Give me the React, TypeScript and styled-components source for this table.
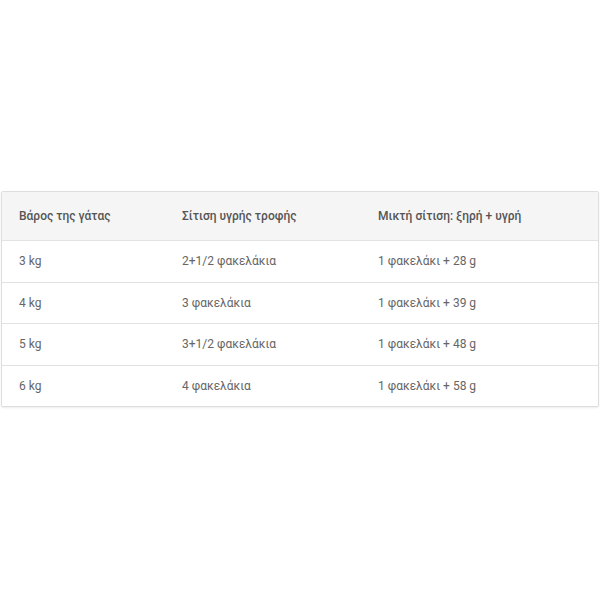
import React from "react";
import styled, { createGlobalStyle } from "styled-components";

const Global = createGlobalStyle`
  html, body { margin: 0; padding: 0; background: #fff; }
  body { font-family: Roboto, "Noto Sans", sans-serif; }
`;

const Page = styled.div`
  min-height: 598px;
  display: flex;
  flex-direction: column;
  justify-content: center;
  padding: 0 1px;
  box-sizing: border-box;
`;

const Table = styled.div`
  border: 1px solid #dedede;
  border-radius: 2px;
  box-shadow: 0 1px 2px rgba(0, 0, 0, 0.08);
  background: #fff;
`;

const Row = styled.div<{ $head?: boolean }>`
  display: grid;
  grid-template-columns: 163px 196px 1fr;
  align-items: center;
  box-sizing: border-box;
  height: ${(p) => (p.$head ? "48px" : "41.5px")};
  background: ${(p) => (p.$head ? "#f5f5f5" : "#fff")};
  border-top: ${(p) => (p.$head ? "none" : "1px solid #e2e2e2")};
`;

const Cell = styled.div<{ $head?: boolean }>`
  padding-left: 17px;
  font-size: 12px;
  font-weight: ${(p) => (p.$head ? 500 : 400)};
  color: ${(p) => (p.$head ? "#555" : "#666")};
  white-space: nowrap;
`;

const rows = [
  ["3 kg", "2+1/2 φακελάκια", "1 φακελάκι + 28 g"],
  ["4 kg", "3 φακελάκια", "1 φακελάκι + 39 g"],
  ["5 kg", "3+1/2 φακελάκια", "1 φακελάκι + 48 g"],
  ["6 kg", "4 φακελάκια", "1 φακελάκι + 58 g"],
];

export default function App() {
  return (
    <>
      <Global />
      <Page>
        <Table>
          <Row $head>
            <Cell $head>Βάρος της γάτας</Cell>
            <Cell $head>Σίτιση υγρής τροφής</Cell>
            <Cell $head>Μικτή σίτιση: ξηρή + υγρή</Cell>
          </Row>
          {rows.map((r) => (
            <Row key={r[0]}>
              {r.map((c) => (
                <Cell key={c}>{c}</Cell>
              ))}
            </Row>
          ))}
        </Table>
      </Page>
    </>
  );
}
